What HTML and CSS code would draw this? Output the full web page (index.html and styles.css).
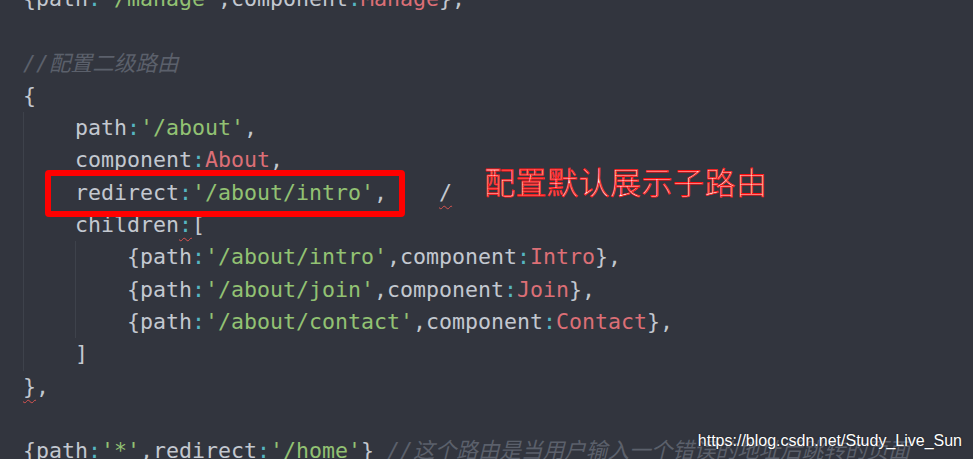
FILE: index.html
```html
<!DOCTYPE html>
<html lang="zh-CN">
<head>
    <meta charset="UTF-8">
    <meta name="viewport" content="width=device-width, initial-scale=1.0">
    <title>配置二级路由</title>
    <link rel="stylesheet" href="styles.css">
</head>
<body>
    <div class="editor">
        <div class="line">{path<span class="p">:</span><span class="s">'/manage'</span>,component<span class="p">:</span><span class="c">Manage</span>},</div>
        <div class="line"></div>
        <div class="line"><span class="cm">//配置二级路由</span></div>
        <div class="line">{</div>
        <div class="block">
            <div class="line">path<span class="p">:</span><span class="s">'/about'</span>,</div>
            <div class="line">component<span class="p">:</span><span class="c">About</span>,</div>
            <div class="line marked">redirect<span class="p">:</span><span class="s">'/about/intro'</span>,    <span class="lint">/</span>
                <div class="mark-box"></div>
                <div class="note">配置默认展示子路由</div>
            </div>
            <div class="line">children<span class="p lint">:</span>[</div>
            <div class="block">
                <div class="line">{path<span class="p">:</span><span class="s">'/about/intro'</span>,component<span class="p">:</span><span class="c">Intro</span>},</div>
                <div class="line">{path<span class="p">:</span><span class="s">'/about/join'</span>,component<span class="p">:</span><span class="c">Join</span>},</div>
                <div class="line">{path<span class="p">:</span><span class="s">'/about/contact'</span>,component<span class="p">:</span><span class="c">Contact</span>},</div>
            </div>
            <div class="line">]</div>
        </div>
        <div class="line"><span class="lint">}</span>,</div>
        <div class="line"></div>
        <div class="line">{path<span class="p">:</span><span class="s">'*'</span>,redirect<span class="p">:</span><span class="s">'/home'</span>} <span class="cm">//这个路由是当用户输入一个错误的地址后跳转的页面</span></div>
    </div>

    <div class="watermark">https://blog.csdn.net/Study_Live_Sun</div>
</body>
</html>
```

FILE: styles.css
```css
* {
    margin: 0;
    padding: 0;
    box-sizing: border-box;
}

html, body {
    height: 100%;
}

body {
    background-color: #32353e;
    overflow: hidden;
    position: relative;
}

.editor {
    margin-top: -17px;
    padding-left: 23px;
    font-family: "DejaVu Sans Mono", "Noto Sans CJK SC", monospace;
    font-size: 21.6px;
    color: #c3c8d0;
}

.line {
    height: 32.3px;
    line-height: 32.3px;
    white-space: pre;
}

.block {
    border-left: 1px solid #3e424b;
    padding-left: 51px;
}

.p {
    color: #56b6c2;
}

.s {
    color: #92c273;
}

.c {
    color: #dc6f76;
}

.cm {
    color: #5b606b;
    font-style: italic;
}

.lint {
    text-decoration: underline wavy #d9534f;
    text-decoration-thickness: 1px;
    text-underline-offset: 5px;
}

.marked {
    position: relative;
}

.mark-box {
    position: absolute;
    left: -30px;
    top: -7px;
    width: 360px;
    height: 47px;
    border: 6px solid #ff0000;
    border-radius: 4px;
}

.note {
    position: absolute;
    left: 409px;
    top: -14px;
    font-family: "Noto Sans CJK SC", sans-serif;
    font-weight: 300;
    font-size: 31px;
    line-height: 36px;
    color: #fff4f4;
    -webkit-text-stroke: 0.8px #ff1010;
    letter-spacing: 0.5px;
}

.watermark {
    position: absolute;
    right: 11px;
    bottom: 9px;
    font-family: "Liberation Sans", Arial, sans-serif;
    font-size: 16px;
    color: #ffffff;
    text-shadow: 0 0 2px rgba(0, 0, 0, 0.5);
}
```
